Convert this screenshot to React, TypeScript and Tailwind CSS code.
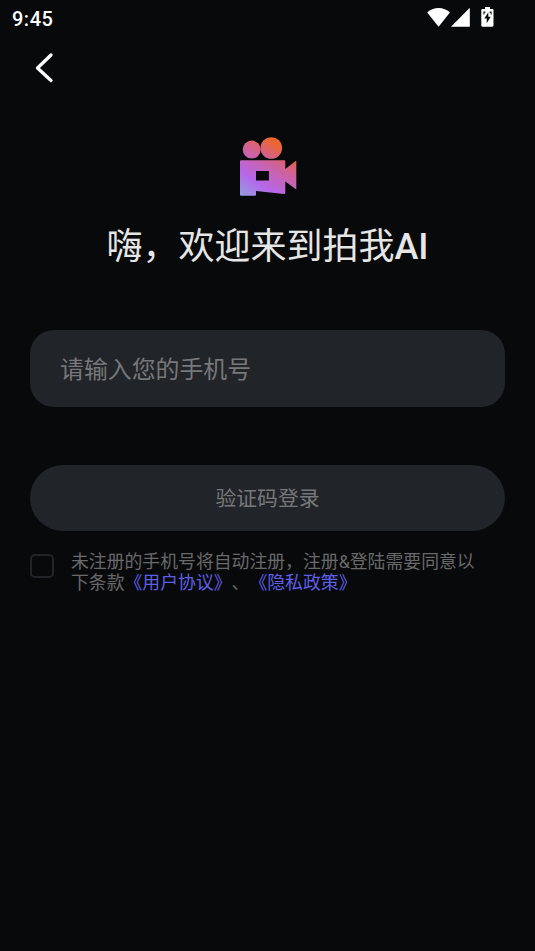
import { useState } from 'react'

// Status bar icons
const WifiIcon = () => (
  <svg width="24" height="20" viewBox="0 0 24 20" fill="#fff">
    <path d="M0.2 5.400C3.200 2.400 7.200 0.900 11.600 0.900s8.300 1.500 11.300 4.500L11.600 19.700z" />
  </svg>
);

const SignalIcon = () => (
  <svg width="20" height="20" viewBox="0 0 20 20" fill="#fff">
    <path d="M18.800 0.800V19.800H0z" />
  </svg>
);

const BatteryIcon = () => (
  <svg width="14" height="20" viewBox="0 0 14 20">
    <path
      d="M4 0h5v2h2.300c.7 0 1.200.5 1.200 1.200v15.400c0 .7-.5 1.200-1.200 1.200H1.500c-.7 0-1.200-.5-1.200-1.200V3.200C.3 2.500.8 2 1.500 2H4z"
      fill="#fff"
    />
    <path d="M7.300 5.300v4.500h2.400L5.700 16.200v-4.700H3.300z" fill="#08090a" />
    <path d="M2.400 4.500h2v1.200h-1v1.800h-1zM8.600 4.500h2v3h-1V5.700h-1z" fill="#08090a" />
  </svg>
);

const Logo = () => (
  <svg width="60" height="62" viewBox="0 0 60 62">
    <defs>
      <linearGradient id="body" x1="5" y1="62" x2="38" y2="8" gradientUnits="userSpaceOnUse">
        <stop offset="0" stopColor="#91a0e0" />
        <stop offset="0.33" stopColor="#b667ea" />
        <stop offset="0.69" stopColor="#cd629f" />
        <stop offset="0.84" stopColor="#dc6270" />
        <stop offset="1" stopColor="#ea6630" />
      </linearGradient>
    </defs>
    <g fill="url(#body)">
      <circle cx="13.700" cy="13.600" r="9" />
      <circle cx="33.300" cy="12" r="10.800" />
      <path
        fillRule="evenodd"
        d="M3.300 24.300H46c.8 0 1.300.5 1.300 1.300V33L58.300 24.400V53.600L47.300 45.400V56.700c0 .8-.5 1.300-1.300 1.200L18 55V58.500c0 .8-.5 1.300-1.300 1.300H3.300c-.8 0-1.300-.5-1.300-1.300V25.600c0-.8.5-1.300 1.300-1.300zM18 34.900V44.400h12.900V34.900z"
      />
    </g>
  </svg>
);

const App = () => {
  const [phone, setPhone] = useState<string>('');
  const [agreed, setAgreed] = useState<boolean>(false);

  return (
    <div className="min-h-screen w-full bg-[#08090a] font-['Roboto','Noto_Sans_CJK_SC',sans-serif] [text-spacing-trim:space-all]">
      {/* Status bar */}
      <div className="flex h-9 items-start justify-between pl-3 pr-[40px] pt-[7px]">
        <span className="text-[20px] font-medium leading-6 tracking-[0.5px] text-white">9:45</span>
        <div className="flex">
          <WifiIcon />
          <SignalIcon />
          <div className="ml-[10px]">
            <BatteryIcon />
          </div>
        </div>
      </div>

      {/* Back */}
      <button className="ml-[34px] mt-[16px] block" aria-label="返回">
        <svg width="20" height="32" viewBox="0 0 20 32" fill="none">
          <path d="M17 3L3.500 16L17 28.500" stroke="#fff" strokeWidth="3.300" strokeLinecap="round" strokeLinejoin="round" />
        </svg>
      </button>

      {/* Logo and greeting */}
      <div className="mt-[52px] flex flex-col items-center">
        <Logo />
        <h1 className="mt-[23px] whitespace-nowrap text-[36px] leading-[52px] text-[#e6e6e6]">
          嗨，欢迎来到拍我<span className="font-medium">AI</span>
        </h1>
      </div>

      {/* Login form */}
      <div className="mt-[57px] px-[30px]">
        <input
          value={phone}
          onChange={(e) => setPhone(e.target.value)}
          placeholder="请输入您的手机号"
          className="block h-[77px] w-full rounded-[24px] bg-[#212428] px-[30px] pt-[2px] text-[23.900px] text-white outline-none placeholder:text-[#77787a]"
        />
        <button className="mt-[58px] block h-[66px] w-full rounded-full bg-[#212428] pt-[3px] text-[20.800px] text-[#77787a]">
          验证码登录
        </button>

        <div className="mt-5 flex items-start">
          <button
            role="checkbox"
            aria-checked={agreed}
            aria-label="同意条款"
            onClick={() => setAgreed(!agreed)}
            className={`mt-[3px] h-6 w-6 shrink-0 rounded-[5px] border-2 border-[#212428] ${agreed ? 'bg-[#6464f5]' : ''}`}
          />
          <p className="ml-[17px] whitespace-nowrap text-[17.850px] leading-[21px] text-[#69696a]">
            未注册的手机号将自动注册，注册&amp;登陆需要同意以
            <br />
            下条款<span className="text-[#5f5fe8]">《用户协议》</span>、<span className="text-[#5f5fe8]">《隐私政策》</span>
          </p>
        </div>
      </div>
    </div>
  );
}

export default App;
